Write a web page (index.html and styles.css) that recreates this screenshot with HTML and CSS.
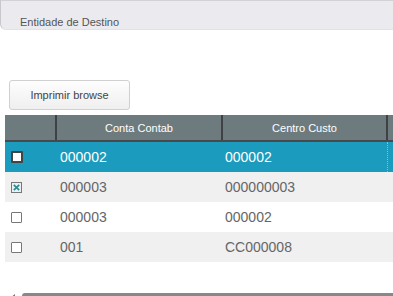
FILE: index.html
```html
<!DOCTYPE html>
<html>
<head>
<meta charset="utf-8">
<link rel="stylesheet" href="styles.css">
</head>
<body>
<div class="panel"><span class="panel-label">Entidade de Destino</span></div>
<div class="toolbar"><button class="btn">Imprimir browse</button></div>
<div class="grid">
  <div class="row head">
    <div class="cell c1"></div>
    <div class="cell c2">Conta Contab</div>
    <div class="cell c3">Centro Custo</div>
    <div class="cell c4"></div>
  </div>
  <div class="row sel">
    <div class="cell c1"><span class="chk"></span></div>
    <div class="cell c2">000002</div>
    <div class="cell c3">000002</div>
    <div class="cell c4 focus"></div>
  </div>
  <div class="row alt">
    <div class="cell c1"><svg class="chkx" width="11" height="11" viewBox="0 0 11 11"><rect x="0.5" y="0.5" width="10" height="10" fill="#eef0f0" stroke="#777"/><path d="M2.8 2.8 L8.2 8.2 M8.2 2.8 L2.8 8.2" stroke="#2a8c95" stroke-width="1.7"/></svg></div>
    <div class="cell c2">000003</div>
    <div class="cell c3">000000003</div>
    <div class="cell c4"></div>
  </div>
  <div class="row">
    <div class="cell c1"><span class="chk"></span></div>
    <div class="cell c2">000003</div>
    <div class="cell c3">000002</div>
    <div class="cell c4"></div>
  </div>
  <div class="row alt">
    <div class="cell c1"><span class="chk"></span></div>
    <div class="cell c2">001</div>
    <div class="cell c3">CC000008</div>
    <div class="cell c4"></div>
  </div>
</div>
<div class="hscroll"><span class="arrow"></span><span class="thumb"></span></div>
</body>
</html>
```
FILE: styles.css
```css
html, body {
  margin: 0;
  padding: 0;
  overflow: hidden;
  background: #fff;
  font-family: "Liberation Sans", Arial, sans-serif;
}
.panel {
  height: 28px;
  background: #ebebef;
  border-top: 1px solid #d2d2d6;
  border-left: 1px solid #c8c8cc;
  border-bottom: 1px solid #e2e2e6;
  border-bottom-left-radius: 6px;
  box-sizing: content-box;
  display: flex;
  align-items: flex-end;
}
.panel-label {
  margin-left: 19px;
  margin-bottom: 1px;
  font-size: 11px;
  color: #555;
}
.toolbar {
  padding: 50px 0 0 9px;
}
.btn {
  display: block;
  width: 121px;
  height: 30px;
  margin: 0;
  padding: 0;
  border: 1px solid #d0d0d0;
  border-radius: 3px;
  background: linear-gradient(#fdfdfd, #efefef);
  font-family: "Liberation Sans", Arial, sans-serif;
  font-size: 11px;
  color: #444;
}
.grid {
  margin: 5px 0 0 5px;
  overflow: hidden;
}
.row {
  display: flex;
  height: 30px;
  background: #fff;
  font-size: 14px;
  color: #666;
}
.row.alt { background: #f0f0f0; }
.row.sel { background: #1b9bbd; color: #fff; }
.row.head {
  height: 25px;
  background: #6e7b7e;
  border-bottom: 2px solid #47494a;
  color: #fff;
  font-size: 11px;
}
.cell {
  display: flex;
  align-items: center;
  box-sizing: border-box;
  flex: none;
}
.c1 { width: 51px; padding-left: 6px; }
.c2 { width: 166px; padding-left: 4px; }
.c3 { width: 165px; padding-left: 3px; }
.c4 { width: 40px; }
.head .cell { justify-content: center; padding-left: 0; border-right: 1px solid #3e4244; }
.head .c1 { width: 52px; border-right-width: 2px; }
.head .c2 { width: 166px; border-right-width: 2px; }
.head .c3 { width: 165px; border-right-width: 2px; }
.head .c4 { border-right: none; }
.focus { border-left: 1px dotted #e59a9a; }
.chk {
  display: block;
  width: 11px;
  height: 11px;
  box-sizing: border-box;
  border: 1px solid #777;
  background: #fff;
  border-radius: 1px;
}
.sel .chk { border: 2px solid #444; width: 12px; height: 12px; }
.chkx { display: block; }
.hscroll {
  margin-top: 31px;
  height: 4px;
  display: flex;
  align-items: flex-start;
}
.arrow {
  width: 0;
  height: 0;
  margin: 1px 0 0 10px;
  border-right: 5px solid #777;
  border-top: 4px solid transparent;
  border-bottom: 4px solid transparent;
}
.thumb {
  flex: 1;
  margin-left: 7px;
  height: 6px;
  background: #888;
  border-radius: 3px 0 0 0;
}
```
